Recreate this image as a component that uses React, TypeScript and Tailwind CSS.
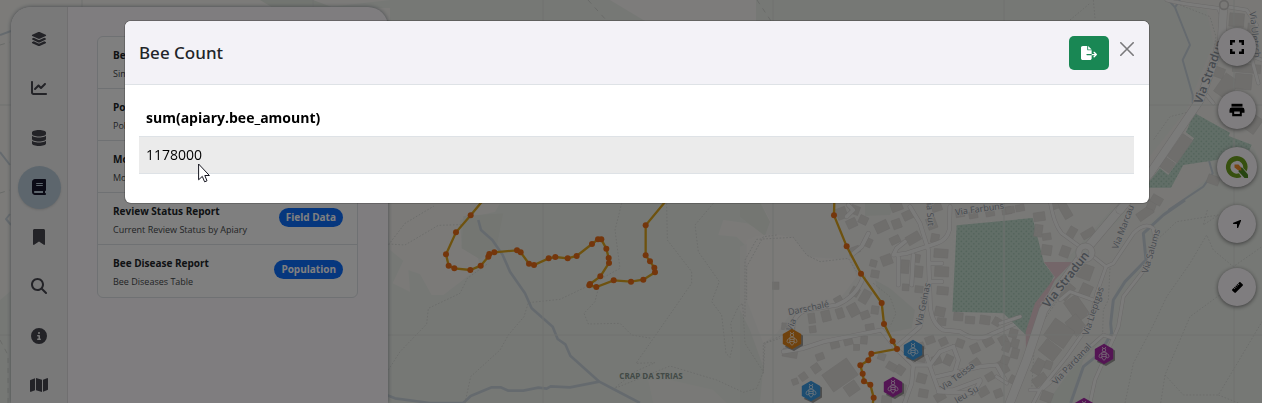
import { useState } from "react";
import type { ReactNode } from "react";
import {
  FaBook,
  FaBookmark,
  FaChartLine,
  FaCircleInfo,
  FaDatabase,
  FaFileExport,
  FaLayerGroup,
  FaLocationArrow,
  FaMagnifyingGlass,
  FaMap,
  FaRuler,
} from "react-icons/fa6";

type Point = [number, number];
type Building = [x: number, y: number, w: number, h: number, angle: number];

const westTrack: Point[] = [
  [310, 0], [272, 46], [228, 97], [198, 163], [206, 197], [223, 205], [271, 210],
  [302, 197], [325, 170], [328, 162], [343, 157], [411, 151], [422, 157], [447, 191],
  [462, 195], [506, 175], [526, 171], [563, 175], [590, 168], [636, 132], [654, 118],
  [664, 118], [679, 146], [686, 174], [687, 189], [661, 229], [630, 252], [628, 256],
  [649, 261], [701, 241], [753, 245], [790, 239], [825, 217], [823, 203], [810, 184],
  [797, 166], [797, 76], [860, 0],
];

const eastTrack: Point[] = [
  [283, 0], [282, 46], [320, 139], [363, 221], [425, 309], [432, 372], [458, 424],
  [471, 447], [394, 461], [385, 481], [361, 496], [368, 521], [372, 544], [391, 554],
  [401, 593], [394, 640],
];

const townBuildings: Building[] = [
  [305, 40, 30, 34, -20], [335, 70, 30, 26, -25], [345, 30, 26, 26, 20], [370, 60, 26, 24, 25],
  [425, 80, 40, 30, -25], [470, 72, 26, 28, -20], [505, 45, 34, 26, -25], [520, 115, 42, 28, -30],
  [465, 120, 30, 22, -25], [440, 180, 32, 30, -20], [400, 190, 20, 20, 15], [405, 222, 24, 22, 10],
  [345, 150, 28, 20, -20], [385, 128, 20, 26, 25], [575, 70, 28, 34, -20], [590, 22, 30, 24, -18],
  [585, 115, 24, 26, 10], [603, 160, 42, 26, 4], [605, 215, 42, 30, 3], [608, 272, 34, 24, 5],
  [600, 335, 30, 28, 12], [605, 365, 26, 22, 5], [535, 215, 26, 34, 6], [495, 200, 24, 40, 4],
  [497, 262, 20, 20, 4], [537, 268, 24, 20, 6], [530, 175, 20, 24, 10], [470, 20, 34, 26, -20],
  [215, 355, 20, 30, -8], [258, 348, 26, 32, -14], [300, 340, 22, 30, -18], [340, 330, 30, 36, -28],
  [375, 345, 26, 22, -20], [405, 330, 22, 24, 8], [375, 290, 26, 40, 30], [345, 275, 24, 26, 30],
  [295, 300, 24, 20, -30], [218, 388, 20, 20, -8], [145, 380, 40, 20, 5], [150, 460, 44, 24, 10],
  [240, 470, 24, 20, -20], [285, 435, 26, 20, -15], [325, 425, 26, 20, -15], [350, 442, 18, 18, 0],
  [372, 420, 20, 24, 5], [390, 385, 26, 26, -10], [228, 505, 24, 26, -35], [190, 530, 22, 22, -35],
  [165, 545, 18, 18, -20], [300, 525, 90, 62, -35], [335, 565, 40, 34, -35], [455, 500, 30, 22, 30],
  [480, 510, 26, 26, 35], [425, 470, 22, 20, 20], [485, 570, 24, 34, 8], [440, 600, 30, 24, 5],
  [540, 440, 26, 22, -20], [570, 420, 28, 22, -20], [610, 425, 24, 22, -25], [545, 475, 22, 22, 10],
  [590, 480, 26, 26, -20], [625, 480, 24, 30, 25], [545, 535, 28, 28, 15], [550, 580, 28, 24, 10],
  [600, 590, 32, 24, -30], [655, 350, 28, 24, 5], [690, 360, 28, 22, 5], [735, 360, 30, 26, 8],
  [770, 365, 22, 24, 30], [660, 430, 24, 24, 20], [705, 445, 26, 26, -25], [745, 425, 30, 24, -30],
  [790, 420, 26, 26, -30], [705, 490, 30, 22, -35], [750, 530, 26, 22, -30], [790, 500, 24, 40, -30],
  [825, 460, 22, 30, 15], [730, 575, 30, 26, -30], [775, 580, 24, 24, -20], [820, 540, 24, 24, 30],
  [660, 40, 26, 22, -10], [700, 45, 26, 20, -10], [750, 38, 26, 22, -10], [800, 32, 28, 22, -10],
  [840, 24, 26, 20, -10], [107, 257, 20, 22, 0],
];

const eastBuildings: Building[] = [
  [118, 50, 34, 26, -8], [115, 92, 24, 36, 8], [140, 110, 26, 20, -8], [140, 150, 30, 30, 8],
  [195, 30, 26, 52, -30], [165, 15, 20, 24, -20], [215, 98, 24, 34, 30], [265, 100, 42, 22, -30],
  [195, 155, 28, 32, 20], [255, 215, 44, 44, 20], [200, 275, 30, 50, 40], [258, 270, 34, 34, 25],
  [230, 325, 46, 72, -35], [228, 375, 42, 54, -40], [178, 400, 72, 62, 35], [150, 450, 56, 44, 38],
  [115, 500, 28, 46, 30], [145, 495, 22, 24, 20], [120, 540, 44, 28, -35], [140, 590, 34, 30, 20],
  [435, 40, 50, 26, -35], [455, 15, 26, 26, 20], [30, 30, 26, 20, -10], [40, 400, 24, 26, 15],
  [20, 440, 22, 30, 20], [45, 430, 22, 26, 15], [15, 480, 24, 24, 20],
];

const northBuildings: Building[] = [
  [420, 445, 36, 82, 35], [382, 495, 36, 34, 35], [530, 215, 46, 30, 20], [560, 260, 50, 66, 35],
  [610, 245, 50, 46, 5], [620, 205, 84, 26, 5], [600, 310, 80, 34, 25], [630, 365, 60, 52, 35],
  [590, 60, 44, 40, 5], [635, 90, 24, 40, 5], [520, 540, 36, 26, 20], [350, 600, 34, 24, 30],
];

const cropWest = "translate(380 200) scale(0.33333)";
const cropTown = "translate(740 200) scale(0.33333)";
const cropEast = "translate(1000 200) scale(0.33333)";
const cropNorth = "translate(1040 0) scale(0.33333)";

function Track({ points }: { points: Point[] }) {
  return (
    <g>
      <polyline points={points.map((p) => p.join(",")).join(" ")} fill="none" stroke="#dca51e" strokeWidth="7" />
      {points.map(([x, y]) => (
        <circle key={`${x}-${y}`} cx={x} cy={y} r="9" fill="#e86c18" />
      ))}
    </g>
  );
}

function Buildings({ items }: { items: Building[] }) {
  return (
    <g fill="#dfddd9" stroke="#d3d1ce" strokeWidth="1.5">
      {items.map(([x, y, w, h, angle]) => (
        <rect key={`${x}-${y}`} x={x - w / 2} y={y - h / 2} width={w} height={h} transform={`rotate(${angle} ${x} ${y})`} />
      ))}
    </g>
  );
}

function Roads({ paths, width }: { paths: string[]; width: number }) {
  return (
    <g fill="none" strokeLinejoin="round" strokeLinecap="round">
      {paths.map((d) => (
        <path key={`edge${d}`} d={d} stroke="#d6d4d2" strokeWidth={width} />
      ))}
      {paths.map((d) => (
        <path key={d} d={d} stroke="#f7f6f5" strokeWidth={width - 3} />
      ))}
    </g>
  );
}

function BeeMarker({ x, y, color }: { x: number; y: number; color: string }) {
  return (
    <g transform={`translate(${x} ${y})`}>
      <path d="M1.5-8 L11-3.5 V6.5 L2 12 L-7 8 Z" fill="#6f6d6b" opacity="0.65" />
      <path d="M0-10.2 L9.2-5.1 V5.1 L0 10.2 L-9.2 5.1 V-5.1 Z" fill={color} />
      <g fill="none" stroke="#fff" strokeWidth="0.8" opacity="0.85">
        <circle cx="0" cy="-3.9" r="1.7" />
        <path d="M-1-5.5 L-1.8-7 M1-5.5 L1.8-7" />
        <path d="M-2.1-1.8 H2.1 V3.6 Q1.6 5.7 0 6.2 Q-1.6 5.7-2.1 3.6 Z M-2.1 0.4 H2.1 M-2.1 2.6 H2.1" />
        <path d="M-2.1-0.8 Q-5.2 0-5 2.3 Q-4.6 4.8-2.1 3.2 M2.1-0.8 Q5.2 0 5 2.3 Q4.6 4.8 2.1 3.2" />
      </g>
    </g>
  );
}

function RoadLabel({ x, y, angle, big, children }: { x: number; y: number; angle: number; big?: boolean; children: string }) {
  return (
    <text
      transform={`translate(${x} ${y}) rotate(${angle})`}
      fontSize={big ? 12 : 9}
      fontWeight={big ? 600 : 400}
      fontFamily="'Open Sans', sans-serif"
      textAnchor="middle"
      fill="#8d959f"
      stroke="#f4f3f1"
      strokeWidth="1.5"
      paintOrder="stroke"
    >
      {children}
    </text>
  );
}

function MapCanvas() {
  return (
    <svg className="absolute inset-0 h-full w-full" viewBox="0 0 1262 403" preserveAspectRatio="xMidYMin slice" aria-hidden="true">
      <defs>
        <pattern id="orchard" width="15" height="15" patternUnits="userSpaceOnUse">
          <rect width="15" height="15" fill="#c3dcce" />
          <circle cx="4" cy="4" r="2.6" fill="#a9cab9" />
          <circle cx="11.5" cy="11.5" r="2.6" fill="#a9cab9" />
        </pattern>
      </defs>
      <rect width="1262" height="403" fill="#edf1eb" />
      <path d="M0 0 H262 L275 8 H320 L390 0 H300 V8 H390 V20 H12 V290 L0 300 Z" fill="#f8f7f3" />
      <path d="M260 0 H313 L345 12 H280 Z" fill="#e5ebe2" />
      <path d="M610 0 H756 V21 H645 Z" fill="#fbf9f6" />

      <g transform={cropWest}>
        <path d="M20 0 H366 L345 35 L240 60 L245 145 L290 160 L300 200 L190 285 L155 285 L120 222 L85 210 L90 275 L38 250 L70 182 L30 150 L20 60 Z" fill="#f7f5f1" />
        <path d="M250 48 L370 40 L350 140 L300 178 L245 145 Z" fill="#e8ece5" />
        <path d="M1030 60 L1100 70 L1180 110 L1110 150 L1070 110 L1015 105 Z M1140 0 H1220 V540 L1175 510 L1120 390 L1095 260 L1115 150 L1170 70 Z" fill="#f7f5f1" />
        <path d="M805 540 H870 L1000 570 L1040 609 H820 Z" fill="#f3f3ee" />
      </g>

      <g transform={cropTown}>
        <path d="M60 0 L90 60 L75 110 L0 140 V620 H800 L860 460 L960 200 L1140 0 Z" fill="#f3f2ef" />
        <path d="M0 0 H55 L90 65 L75 108 L0 50 Z" fill="#e8ece4" />
        <path d="M0 330 L30 390 L70 500 L60 609 H0 Z" fill="#e9ede6" />
        <path d="M20 120 Q90 90 160 115 L205 170 L330 180 L350 230 L290 310 L160 330 L110 400 L70 430 L20 300 Z" fill="#f8f6f3" />
        <path d="M375 0 H470 L450 45 L375 48 Z M405 240 L450 265 L525 330 L515 385 L440 400 L425 309 Z" fill="#e9ede6" />
      </g>

      <g transform={cropNorth}>
        <path d="M380 0 H666 V560 L590 580 L500 540 L430 630 H200 L440 330 L520 130 L500 30 L400 15 Z" fill="#f2f1ed" />
        <path d="M500 480 L640 440 L666 500 V630 H390 L520 520 Z" fill="#edf1eb" />
      </g>
      <g transform={cropEast}>
        <path d="M430 0 H520 L430 90 L440 180 L350 260 L325 400 L160 609 H20 L80 400 L220 180 Z" fill="#f1f1ed" />
        <path d="M325 400 L250 480 L210 609 H140 L270 430 Z" fill="#e7ece5" />
      </g>

      <g fill="none" stroke="#cbd5dd" strokeLinejoin="round">
        <g transform={cropWest} strokeWidth="8">
          <path d="M295 60 L303 90 L337 120 L368 165 L390 215 L435 280 L455 325 L518 380 L533 417 L556 433 L571 467 L658 545 L700 567 L780 609" />
          <path d="M20 585 L45 595 L150 609 H250 L272 588 L335 562 L362 562 L385 572 H430 L475 563 L500 566 L512 559 L570 562 L658 545" />
        </g>
        <g transform={cropEast} strokeWidth="9">
          <path d="M555 0 L490 45 L430 100 L438 180 L375 245 L340 300 L332 370 L335 400 L300 460 L250 500 L212 609" />
        </g>
        <g transform={cropNorth} strokeWidth="6">
          <path d="M385 0 L405 22 L450 135 L428 180 L458 285 V310 M420 0 L405 22 M465 340 L505 400 L508 485 L518 520 L490 560 L385 630" />
        </g>
        <path d="M0 35 L11 31 M0 152 L10 165 M10 214 L6 219 L11 225" strokeWidth="2" />
      </g>

      <g fill="none" stroke="#d2d5d1" strokeWidth="2.5" strokeDasharray="5 5">
        <g transform={cropWest}>
          <path d="M25 135 L75 70 L162 18 M25 132 L75 135 L175 76 L245 74 M25 510 L60 455 L140 372 L145 325 L240 280 L262 235 L325 190" />
          <path d="M255 609 L272 530 L360 450 L385 405 L432 350 L445 308 L540 298 L620 260 L720 205 L705 90 L725 10" />
          <path d="M655 265 L645 305 L612 340 L625 372 L720 370 L755 405 L815 415 M1000 10 L945 75 L955 155 L1018 245 L995 305 L1025 345 L1038 460 L1050 472 L1060 430 L1052 370 L1075 320 L1088 310 L1095 430 L1150 515 L1155 430 L1200 415" />
          <path d="M860 10 L862 120 L935 215 L935 250 L768 490 L825 488 L765 515 L700 567 L870 498 L1010 540 L1090 577 L1130 565 L1150 515 M1190 105 L1150 110 L1100 200 V300" />
        </g>
        <g transform={cropTown}>
          <path d="M70 520 L70 430 L130 405 M15 350 L15 180 L50 118 L160 112 L200 165 L240 185 L325 175 L350 215 M400 250 L450 290 L468 340 L450 380" />
        </g>
        <g transform={cropEast}>
          <path d="M375 609 L400 490 L460 375 L500 290 L570 190 L620 105 L640 150 L700 200 L786 140 M622 30 L610 75 L655 45 L530 65 L450 140 M482 609 L495 525 L570 350 L700 255 M495 525 L550 585 H655 L786 365 M655 585 L715 609" />
          <path d="M330 205 L325 300 L310 330 L308 400 M95 570 L105 400 L180 290" />
        </g>
        <g transform={cropNorth}>
          <path d="M420 15 L510 50 L528 110 L505 250 L470 330 L390 350 L340 420 M90 60 L150 10 M160 0 L165 55" />
        </g>
        <path d="M0 45 L10 42 M0 193 L10 190 M0 340 L8 355 V403 M588 0 L607 21 M757 0 L771 21" strokeWidth="1" />
      </g>

      <g transform={cropTown}>
        <Buildings items={townBuildings} />
        <Roads
          width={14}
          paths={[
            "M155 395 Q160 340 200 330 L290 315 Q350 290 370 230",
            "M130 455 L190 445 L250 425 L425 390 L470 447 L520 495 H570 L600 455 L640 440",
            "M520 495 L515 550 L490 620 M570 500 L595 570 L640 570 L720 540 M570 500 L560 470",
            "M510 20 L540 70 L565 150 L570 300 Q570 370 610 390 L660 395 Q710 430 760 400 L830 370",
            "M630 20 L628 90 Q620 120 590 130 L500 160 L460 165 L470 145 L495 125 M475 165 V255 M520 165 L515 255",
            "M640 440 L655 480 L640 530 M590 530 L720 500 L770 495 L795 540 M470 440 L540 380 L565 250",
            "M385 100 L365 140 L335 165 M325 15 L340 30 L320 50 M570 190 H605 M570 245 H605 M595 575 L700 580 L720 545",
          ]}
        />
        <path d="M650 76 L878 54 L912 188 L942 229 L858 405 L790 340 L637 335 Z" fill="url(#orchard)" />
      </g>

      <g transform={cropEast}>
        <path d="M132 186 H217 L165 240 L110 350 L90 440 L78 460 L77 395 L105 310 L165 232 Z" fill="#e9ccd2" />
        <Buildings items={eastBuildings} />
        <Roads
          width={12}
          paths={[
            "M150 0 Q160 70 185 100 L240 140 M280 170 L318 200 L340 190 L400 100 Q435 65 460 85 L465 130 L440 200 L370 290 L355 380 L340 415 L285 540 L270 609",
            "M318 200 L290 280 L270 370 L200 470 L120 570 L90 570 M120 570 L100 609 M340 415 L310 405 L130 565",
            "M-10 530 L20 550 M0 370 L60 350 M280 300 L210 275 L180 300",
          ]}
        />
        <Roads width={28} paths={["M400 -20 L265 140", "M240 175 L130 330 L80 480 L25 620"]} />
        <circle cx="256" cy="158" r="29" fill="#f7f6f5" stroke="#d6d4d2" strokeWidth="2" />
        <circle cx="256" cy="158" r="11" fill="#edf1eb" stroke="#d6d4d2" strokeWidth="2" />
      </g>

      <g transform={cropNorth}>
        <path d="M462 338 L570 398 L566 408 L635 434 L624 462 L530 480 L430 495 L393 563 H327 V545 L360 505 L385 525 L462 415 L438 397 Z" fill="url(#orchard)" />
        <Buildings items={northBuildings} />
        <Roads width={12} paths={["M400 5 L440 12 L535 25 L550 60 M560 20 L620 30 L650 75 M500 285 L520 310 M640 170 L666 180 M380 0 L400 5 M620 120 L655 250"]} />
        <Roads width={26} paths={["M550 30 L545 120 L480 300 L330 520 L240 630"]} />
        <circle cx="552" cy="15" r="13" fill="#f2f1ed" stroke="#cfcdcb" strokeWidth="5" />
      </g>

      <path d="M82 0 V7 M313 0 V7 M543 0 V403 M773 0 V403 M1004 0 V403 M1234 0 V403 M0 105 H1262 M0 335 H1262" stroke="#dfe2de" strokeWidth="1" />

      <RoadLabel x={809} y={311} angle={-12}>Darschalé</RoadLabel>
      <RoadLabel x={794} y={326} angle={-68}>Via</RoadLabel>
      <RoadLabel x={980} y={212} angle={-8}>Via Farbuns</RoadLabel>
      <RoadLabel x={927} y={212} angle={86}>Via Sut</RoadLabel>
      <RoadLabel x={926} y={305} angle={-78}>Via Geinas</RoadLabel>
      <RoadLabel x={959} y={379} angle={-37}>Via Teissa</RoadLabel>
      <RoadLabel x={968} y={397} angle={-30}>Jeu Su</RoadLabel>
      <RoadLabel x={1069} y={282} angle={-52} big>Via Stradun</RoadLabel>
      <RoadLabel x={1126} y={228} angle={-69}>Via Marcau</RoadLabel>
      <RoadLabel x={1154} y={252} angle={-74}>Via Salums</RoadLabel>
      <RoadLabel x={1096} y={312} angle={-72}>Via Lieptgas</RoadLabel>
      <RoadLabel x={1074} y={366} angle={-47}>Via Pardanal</RoadLabel>
      <RoadLabel x={1213} y={73} angle={-70} big>Via Stradun</RoadLabel>
      <RoadLabel x={1252} y={35} angle={84}>Via Uletsch</RoadLabel>
      <text x="651" y="379" fontSize="8" fontWeight="700" fontFamily="'Open Sans', sans-serif" textAnchor="middle" fill="#84948c">
        CRAP DA STRIAS
      </text>

      <g transform={cropWest}>
        <Track points={westTrack} />
      </g>
      <g transform={cropTown}>
        <Track points={eastTrack} />
      </g>
      <BeeMarker x={792} y={339} color="#e0851a" />
      <BeeMarker x={913} y={350} color="#3a9ae2" />
      <BeeMarker x={811} y={391} color="#3a9ae2" />
      <BeeMarker x={893} y={387} color="#a82aa8" />
      <BeeMarker x={1104} y={354} color="#a82aa8" />
      <BeeMarker x={1084} y={408} color="#a82aa8" />
    </svg>
  );
}

const navItems: { label: string; icon: ReactNode }[] = [
  { label: "Layers", icon: <FaLayerGroup /> },
  { label: "Charts", icon: <FaChartLine /> },
  { label: "Data", icon: <FaDatabase /> },
  { label: "Reports", icon: <FaBook /> },
  { label: "Bookmarks", icon: <FaBookmark /> },
  { label: "Search", icon: <FaMagnifyingGlass /> },
  { label: "Information", icon: <FaCircleInfo /> },
  { label: "Basemaps", icon: <FaMap className="size-[18px]" /> },
];

const reports = [
  { title: "Bee Count", detail: "Simple Count", tag: "Population" },
  { title: "Pollen Report", detail: "Pollen by Apiary", tag: "Field Data" },
  { title: "Monthly Report", detail: "Monthly Totals", tag: "Population" },
  { title: "Review Status Report", detail: "Current Review Status by Apiary", tag: "Field Data" },
  { title: "Bee Disease Report", detail: "Bee Diseases Table", tag: "Population" },
];

function SidePanel() {
  return (
    <div className="relative ml-[11px] mt-[7px] flex h-[calc(100vh-7px)] w-[377px] overflow-hidden rounded-t-[20px] bg-[#fffbff] shadow-[0_0_4px_#8a9299]">
      <nav className="h-full w-[57px] shrink-0 overflow-hidden border-r border-[#e0dee0] bg-[#f3f3f3]">
        <div className="mt-[7px] grid h-full auto-rows-fr place-items-center">
          {navItems.map((item) => (
            <button
              key={item.label}
              type="button"
              aria-label={item.label}
              className={
                item.label === "Reports"
                  ? "flex size-[43px] items-center justify-center rounded-full bg-[#bacddb] text-base text-[#16162c] shadow"
                  : "flex size-[43px] items-center justify-center rounded-full text-base text-[#46464f]"
              }
            >
              {item.icon}
            </button>
          ))}
        </div>
      </nav>
      <div className="grow pt-[29px] pr-[30px] pl-[29px]">
        <ul className="divide-y divide-[#dee2e6] rounded-md border border-[#dee2e6] bg-white">
          {reports.map((report) => (
            <li key={report.title} className="flex h-[52px] items-start justify-between px-[15px] pt-[11px]">
              <div className="whitespace-nowrap text-[#212529]">
                <div className="text-[10px] leading-[15px] font-bold">{report.title}</div>
                <div className="pt-1 text-[9px] leading-[14px] opacity-85">{report.detail}</div>
              </div>
              <span className="mt-1 -mr-px rounded-full bg-[#0d6efd] px-[7px] text-[10px] leading-[19px] font-bold text-white">{report.tag}</span>
            </li>
          ))}
        </ul>
      </div>
    </div>
  );
}

const roundTool = "flex size-[38px] items-center justify-center rounded-full bg-[#fffbff] text-black shadow-[0_1px_4px_#777]";

function MapTools() {
  return (
    <div className="relative mt-7 mr-[5px] ml-auto flex flex-col items-center gap-[18px] self-start">
      <div className="flex flex-col gap-[25px]">
        <button type="button" aria-label="Full screen" className={roundTool}>
          <svg viewBox="0 0 14 14" className="size-[14px]" fill="none" stroke="currentColor" strokeWidth="2.4">
            <path d="M1.2 5 V1.2 H5 M9 1.2 H12.8 V5 M12.8 9 V12.8 H9 M5 12.8 H1.2 V9" />
          </svg>
        </button>
        <button type="button" aria-label="Print" className={roundTool}>
          <svg viewBox="0 0 16 14" className="h-[14px] w-4" fill="currentColor">
            <path d="M2.5 .8 H13.5 V3.6 H2.5 Z" />
            <path fillRule="evenodd" d="M3 4.6 H13 Q15.5 4.6 15.5 7 V9.8 H12.8 V13.2 H3.2 V9.8 H.5 V7 Q.5 4.6 3 4.6 Z M5.2 8.4 V11 H10.8 V8.4 Z" />
          </svg>
        </button>
      </div>
      <button type="button" aria-label="QGIS" className="flex size-10 items-center justify-center rounded-full bg-[#fffbff] shadow-[0_1px_4px_#777]">
        <svg viewBox="0 0 24 24" className="size-6">
          <path fill="#6ea01e" fillRule="evenodd" d="M12 1 A11 11 0 1 0 16.5 22 L14 18.3 A6.4 6.4 0 1 1 18.2 13 L21.6 16.5 A11 11 0 0 0 12 1 Z" />
          <path fill="#4d8a22" d="M14 12.5 H17 L23 19.5 V23 H19.5 L13.5 16.5 Z" />
          <path fill="#f08a28" d="M9.5 9.5 H13.5 L15.8 12 L16.5 15.5 L12.8 15 L9.5 12.5 Z" />
        </svg>
      </button>
      <div className="flex flex-col gap-[25px]">
        <button type="button" aria-label="My location" className={roundTool}>
          <FaLocationArrow className="size-[10px]" />
        </button>
        <button type="button" aria-label="Measure" className={roundTool}>
          <FaRuler className="size-[11px]" />
        </button>
      </div>
    </div>
  );
}

function ReportDialog({ onClose }: { onClose: () => void }) {
  return (
    <div className="fixed inset-0 flex items-start justify-center overflow-hidden bg-black/50 pt-[21px] pl-3">
      <section role="dialog" aria-modal="true" aria-labelledby="report-title" className="w-full max-w-[1024px] overflow-hidden rounded-md bg-white shadow-[0_0_0_1px_rgba(0,0,0,0.2)]">
        <header className="flex h-16 items-center justify-between border-b border-[#dee2e6] bg-[#f3f2f7] pr-[15px] pl-[14px]">
          <h1 id="report-title" className="font-['Noto_Sans',sans-serif] text-[17px] font-medium text-[#212529]">
            Bee Count
          </h1>
          <div className="flex items-start gap-[11px]">
            <button type="button" aria-label="Export" className="flex h-[34px] w-10 items-center justify-center rounded-[5px] bg-[#198754] text-white">
              <FaFileExport className="size-4" />
            </button>
            <button type="button" aria-label="Close" onClick={onClose} className="flex h-[26px] items-center text-[#79797b]">
              <svg viewBox="0 0 14 14" className="size-[14px]" stroke="currentColor" strokeWidth="1.6" strokeLinecap="round">
                <path d="M.8 .8 L13.2 13.2 M13.2 .8 L.8 13.2" />
              </svg>
            </button>
          </div>
        </header>
        <div className="pt-[15px] pr-[15px] pb-[29px] pl-[14px]">
          <table className="w-full border-collapse text-left text-sm text-black">
            <thead>
              <tr className="h-9 border-b border-[#dee2e6]">
                <th className="px-[7px] font-bold">sum(apiary.bee_amount)</th>
              </tr>
            </thead>
            <tbody>
              <tr className="h-[37px] border-b border-[#dee2e6] bg-[#ebebeb]">
                <td className="px-[7px]">1178000</td>
              </tr>
            </tbody>
          </table>
        </div>
      </section>
      <svg viewBox="0 0 12 20" className="pointer-events-none absolute top-[163px] left-[198px] h-5 w-3" aria-hidden="true">
        <path d="M.6 1 V16.8 L4.3 13.4 L6.6 18.8 L9 17.8 L6.8 12.5 H11.4 Z" fill="#fff" stroke="#15151f" strokeWidth="1" />
      </svg>
    </div>
  );
}

export default function App() {
  const [open, setOpen] = useState(true);
  return (
    <main className="relative flex h-screen overflow-hidden font-['Open_Sans','Noto_Sans',sans-serif]">
      <MapCanvas />
      <SidePanel />
      <MapTools />
      {open && <ReportDialog onClose={() => setOpen(false)} />}
    </main>
  );
}
